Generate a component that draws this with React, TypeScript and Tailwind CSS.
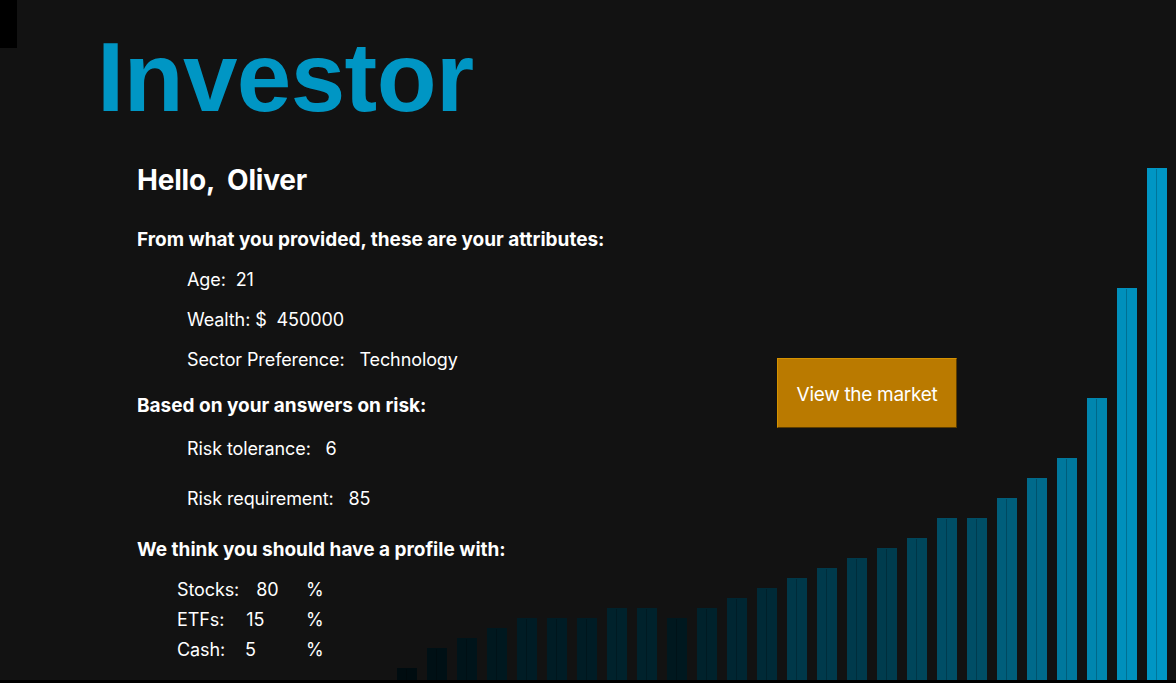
import React from "react";

const bars = [
  { h: 12, g: 12 },
  { h: 32, g: 16 },
  { h: 42, g: 20 },
  { h: 52, g: 24 },
  { h: 62, g: 28 },
  { h: 62, g: 28 },
  { h: 62, g: 28 },
  { h: 72, g: 34 },
  { h: 72, g: 34 },
  { h: 62, g: 24 },
  { h: 72, g: 34 },
  { h: 82, g: 38 },
  { h: 92, g: 42 },
  { h: 102, g: 56 },
  { h: 112, g: 58 },
  { h: 122, g: 58 },
  { h: 132, g: 60 },
  { h: 142, g: 70 },
  { h: 162, g: 78 },
  { h: 162, g: 78 },
  { h: 182, g: 94 },
  { h: 202, g: 106 },
  { h: 222, g: 120 },
  { h: 282, g: 134 },
  { h: 392, g: 144 },
  { h: 512, g: 150 },
];

function MarketChart() {
  return (
    <svg width="770" height="512" viewBox="0 0 770 512" className="block">
      {bars.map((b, i) => {
        const x = i * 30;
        const fill = `rgb(0, ${b.g}, ${Math.round(b.g * 1.307)})`;
        return (
          <g key={i}>
            <rect x={x} y={512 - b.h} width={20} height={b.h} fill={fill} />
            <rect x={x + 9} y={512 - b.h + 1} width={1} height={b.h - 1} fill="rgba(0,0,0,0.22)" />
          </g>
        );
      })}
    </svg>
  );
}

function Attr({ text }: { text: string }) {
  return <p className="h-[40px] leading-[40px] whitespace-pre">{text}</p>;
}

export default function App() {
  return (
    <div
      className="relative h-[683px] w-full overflow-hidden bg-[#121212] text-white flex flex-col"
      style={{ fontFamily: "Inter, 'Noto Sans', sans-serif" }}
    >
      {/* chart sits behind everything */}
      <div className="absolute left-[397px] bottom-[3px]">
        <MarketChart />
      </div>

      <div className="relative flex-1 flex flex-col">
        <div className="flex items-start">
          <div className="w-[17px] h-[48px] bg-black" />
          <h1
            className="ml-[80px] mt-[27px] text-[98px] leading-[100px] font-bold tracking-[-0.6px] text-[#0096c4]"
            style={{ fontFamily: "'Liberation Sans', Arial, sans-serif" }}
          >
            Investor
          </h1>
        </div>

        <div className="flex">
          <div className="ml-[137px] w-[640px] mt-[36px]">
            <h2 className="text-[28px] leading-[34px] font-bold tracking-[-0.2px] whitespace-pre">Hello,  Oliver</h2>

            <p className="mt-[31px] text-[19px] leading-[24px] font-bold">
              From what you provided, these are your attributes:
            </p>
            <div className="ml-[50px] mt-[8px] text-[18px] tracking-[-0.1px]">
              <Attr text="Age:  21" />
              <Attr text="Wealth: $  450000" />
              <Attr text="Sector Preference:   Technology" />
            </div>

            <p className="mt-[14px] text-[19px] leading-[24px] font-bold">
              Based on your answers on risk:
            </p>
            <div className="ml-[50px] mt-[6px] text-[18px] tracking-[-0.1px]">
              <p className="h-[50px] leading-[50px] whitespace-pre">Risk tolerance:   6</p>
              <p className="h-[50px] leading-[50px] whitespace-pre">Risk requirement:   85</p>
            </div>

            <p className="mt-[14px] text-[19px] leading-[24px] font-bold">
              We think you should have a profile with:
            </p>
            <div className="ml-[40px] mt-[13px] text-[18px] tracking-[-0.1px]">
              <div className="flex h-[30px] leading-[30px]">
                <span className="w-[129px]">
                  Stocks:<span className="ml-[17px]">80</span>
                </span>
                <span>%</span>
              </div>
              <div className="flex h-[30px] leading-[30px]">
                <span className="w-[129px]">
                  ETFs:<span className="ml-[22px]">15</span>
                </span>
                <span>%</span>
              </div>
              <div className="flex h-[29px] leading-[29px]">
                <span className="w-[129px]">
                  Cash:<span className="ml-[20px]">5</span>
                </span>
                <span>%</span>
              </div>
            </div>
          </div>

          <div className="mt-[231px]">
            <button
              type="button"
              className="w-[180px] h-[70px] pt-[4px] bg-[#ba7a00] text-white text-[19px] tracking-[-0.3px] border border-t-[#d59200] border-l-[#d59200] border-r-[#5c3d00] border-b-[#5c3d00]"
            >
              View the market
            </button>
          </div>
        </div>
      </div>

      <div className="relative h-[3px] bg-black" />
    </div>
  );
}
